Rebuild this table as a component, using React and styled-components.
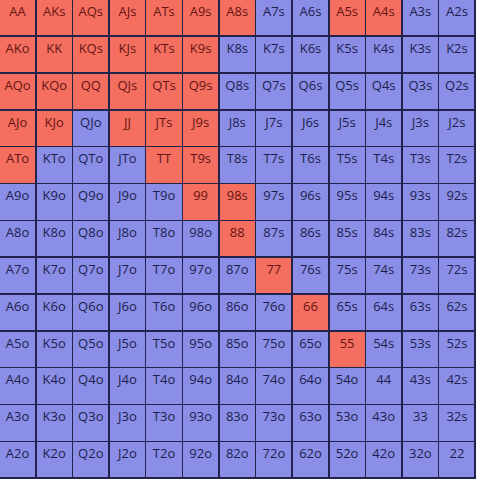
import React from 'react';
import styled, { createGlobalStyle } from 'styled-components';

const GlobalStyle = createGlobalStyle`
  html, body {
    margin: 0;
    padding: 0;
    background: #ffffff;
  }
`;

const Chart = styled.div`
  width: 476px;
  height: 479px;
  box-sizing: border-box;
  display: grid;
  grid-template-columns: repeat(13, 1fr);
  grid-template-rows: repeat(13, 1fr);
  gap: 1.5px;
  padding: 0 1.5px 1.5px 0;
  background-color: #23224a;
`;

const Cell = styled.div`
  background-color: ${(props) => (props.$raise ? '#f46f5f' : '#8a8ee6')};
  color: ${(props) => (props.$raise ? '#661414' : '#1d1f4e')};
  font-family: 'Open Sans', 'Liberation Sans', sans-serif;
  font-size: 13px;
  line-height: 1;
  text-align: center;
  padding-top: 5px;
  box-sizing: border-box;
  overflow: hidden;
`;

const RANKS = 'AKQJT98765432'.split('');

const RAISE = new Set([
  'AA', 'AKs', 'AQs', 'AJs', 'ATs', 'A9s', 'A8s', 'A5s', 'A4s',
  'AKo', 'KK', 'KQs', 'KJs', 'KTs', 'K9s',
  'AQo', 'KQo', 'QQ', 'QJs', 'QTs', 'Q9s',
  'AJo', 'KJo', 'JJ', 'JTs', 'J9s',
  'ATo', 'TT', 'T9s',
  '99', '98s',
  '88', '77', '66', '55',
]);

const handName = (row, col) => {
  if (row === col) return RANKS[row] + RANKS[col];
  if (col > row) return RANKS[row] + RANKS[col] + 's';
  return RANKS[col] + RANKS[row] + 'o';
};

const App = () => {
  const cells = [];
  RANKS.forEach((_, row) => {
    RANKS.forEach((__, col) => {
      const hand = handName(row, col);
      cells.push(
        <Cell key={hand} $raise={RAISE.has(hand)}>
          {hand}
        </Cell>
      );
    });
  });

  return (
    <>
      <GlobalStyle />
      <Chart>{cells}</Chart>
    </>
  );
};

export default App;
